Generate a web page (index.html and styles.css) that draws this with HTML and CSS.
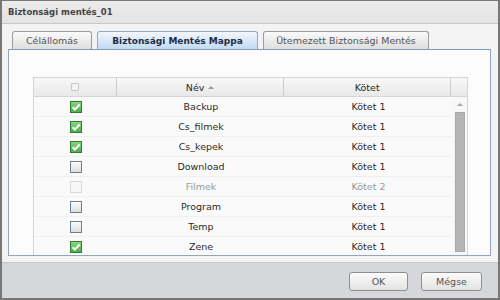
FILE: index.html
```html
<!DOCTYPE html>
<html>
<head>
	<title>Biztonsági mentés_01</title>
	<meta charset="utf-8">
	<link rel="stylesheet" href="styles.css">
</head>
<body>

	<div class="window">

		<div class="titlebar">Biztonsági mentés_01</div>

		<div class="content">

			<div class="tabs">
				<div class="tab">Célállomás</div>
				<div class="tab active">Biztonsági Mentés Mappa</div>
				<div class="tab">Ütemezett Biztonsági Mentés</div>
			</div>

			<div class="panel">
				<div class="grid">

					<div class="grid-head">
						<div class="cell col-check"><span class="cb-head"></span></div>
						<div class="cell col-name">Név <span class="sort-up"></span></div>
						<div class="cell col-vol">Kötet</div>
						<div class="cell col-filler"></div>
					</div>

					<div class="grid-body">
						<div class="rows">
							<div class="row">
								<div class="cell col-check"><span class="cb checked"></span></div>
								<div class="cell col-name">Backup</div>
								<div class="cell col-vol">Kötet 1</div>
							</div>
							<div class="row">
								<div class="cell col-check"><span class="cb checked"></span></div>
								<div class="cell col-name">Cs_filmek</div>
								<div class="cell col-vol">Kötet 1</div>
							</div>
							<div class="row">
								<div class="cell col-check"><span class="cb checked"></span></div>
								<div class="cell col-name">Cs_kepek</div>
								<div class="cell col-vol">Kötet 1</div>
							</div>
							<div class="row">
								<div class="cell col-check"><span class="cb"></span></div>
								<div class="cell col-name">Download</div>
								<div class="cell col-vol">Kötet 1</div>
							</div>
							<div class="row disabled">
								<div class="cell col-check"><span class="cb"></span></div>
								<div class="cell col-name">Filmek</div>
								<div class="cell col-vol">Kötet 2</div>
							</div>
							<div class="row">
								<div class="cell col-check"><span class="cb"></span></div>
								<div class="cell col-name">Program</div>
								<div class="cell col-vol">Kötet 1</div>
							</div>
							<div class="row">
								<div class="cell col-check"><span class="cb"></span></div>
								<div class="cell col-name">Temp</div>
								<div class="cell col-vol">Kötet 1</div>
							</div>
							<div class="row">
								<div class="cell col-check"><span class="cb checked"></span></div>
								<div class="cell col-name">Zene</div>
								<div class="cell col-vol">Kötet 1</div>
							</div>
						</div>

						<div class="scrollbar">
							<span class="scroll-up"></span>
							<span class="scroll-thumb"></span>
						</div>
					</div>

				</div>
			</div>

		</div>

		<div class="footer">
			<button class="btn btn-ok">OK</button>
			<button class="btn">Mégse</button>
		</div>

	</div>

</body>
</html>
```

FILE: styles.css
```css
*,
*:before,
*:after {
	box-sizing: border-box;
}

body {
	margin: 0;
	font-family: "DejaVu Sans", Verdana, sans-serif;
	font-size: 9.5px;
	color: #2a2a2a;
	background: #fff;
}

.window {
	width: 500px;
	height: 300px;
	border: 2px solid #777;
	border-top-width: 1px;
	background: #f3f3f3;
	display: flex;
	flex-direction: column;
	overflow: hidden;
}

.titlebar {
	height: 23px;
	padding: 0 6px;
	display: flex;
	align-items: center;
	font-size: 8.5px;
	font-weight: bold;
	color: #444;
	background: linear-gradient(#ececec, #e3e3e3);
	border-bottom: 1px solid #c8c8c8;
}

.content {
	padding: 7px 7px 6px 6px;
}

/* Tabs */
.tabs {
	display: flex;
	gap: 5px;
	padding-left: 4px;
	height: 18px;
}

.tab {
	display: flex;
	align-items: center;
	justify-content: center;
	padding: 0 12px;
	width: 80px;
	color: #555;
	background: linear-gradient(#fafafa, #dedede);
	border: 1px solid #9c9c9c;
	border-bottom: none;
	border-radius: 3px 3px 0 0;
}

.tab:nth-child(3) {
	width: 166px;
}

.tab.active {
	width: 161px;
	font-size: 9px;
	font-weight: bold;
	color: #1d2d44;
	background: linear-gradient(#f2f7fd, #c3daf1);
	border-color: #8fa8c4;
}

.panel {
	height: 207px;
	background: #fcfcfc;
	border: 1px solid #94a6b9;
	border-top-color: #7f9bb8;
	padding: 27px 0 0 24px;
	overflow: hidden;
}

/* Grid */
.grid {
	width: 435px;
	border: 1px solid #d4d4d4;
	border-bottom: none;
	background: #fff;
}

.grid-head {
	display: flex;
	height: 19px;
	background: linear-gradient(#f8f8f8, #e8e8e8);
	border-bottom: 1px solid #d6d6d6;
}

.grid-head .cell {
	border-right: 1px solid #cacaca;
}

.grid-head .col-filler {
	border-right: none;
}

.cell {
	display: flex;
	align-items: center;
	justify-content: center;
}

.col-check {
	width: 83px;
}

.col-name {
	width: 168px;
}

.col-vol {
	width: 167px;
}

.col-filler {
	width: 16px;
}

.sort-up {
	display: inline-block;
	margin-left: 4px;
	border-left: 3px solid transparent;
	border-right: 3px solid transparent;
	border-bottom: 3px solid #9a9a9a;
}

.cb-head {
	width: 8px;
	height: 8px;
	border: 1px solid #c6c6c6;
	border-radius: 1px;
	background: #f4f4f4;
}

.grid-body {
	display: flex;
}

.rows {
	width: 418px;
}

.row {
	display: flex;
	height: 20px;
	border-bottom: 1px solid #efefef;
	background: #fafafa;
}

.row.disabled {
	color: #999;
}

/* Checkboxes */
.cb {
	width: 12px;
	height: 12px;
	border: 1px solid #6e7f91;
	background: linear-gradient(#fbfbfb, #dedede);
	position: relative;
}

.cb.checked {
	border-color: #2e7d32;
	background: linear-gradient(#8fd27e, #4caf4a);
}

.cb.checked:after {
	content: "";
	position: absolute;
	width: 8px;
	height: 4px;
	border-left: 2px solid #fff;
	border-bottom: 2px solid #fff;
	transform: rotate(-45deg);
	transform-origin: 0 0;
	top: 6px;
	left: 1px;
}

.row.disabled .cb {
	border-color: #d9d9d9;
	background: #f7f7f7;
}

/* Scrollbar */
.scrollbar {
	width: 16px;
	display: flex;
	flex-direction: column;
	align-items: center;
	background: #f7f7f7;
	padding-top: 6px;
}

.scroll-up {
	border-left: 3px solid transparent;
	border-right: 3px solid transparent;
	border-bottom: 3px solid #a8a8a8;
}

.scroll-thumb {
	width: 10px;
	height: 140px;
	margin-top: 6px;
	background: #b5b5b5;
	border: 1px solid #a9a9a9;
}

/* Footer */
.footer {
	flex: 1;
	display: flex;
	justify-content: flex-end;
	align-items: flex-start;
	gap: 13px;
	padding: 9px 16px 0 0;
	background: #d5d7da;
	border-top: 1px solid #c5c7ca;
}

.btn {
	height: 19px;
	width: 61px;
	font-family: inherit;
	font-size: 9.5px;
	color: #555;
	background: linear-gradient(#fbfbfb, #e3e3e3);
	border: 1px solid #8e8e8e;
	border-radius: 3px;
}

.btn-ok {
	width: 59px;
}
```
